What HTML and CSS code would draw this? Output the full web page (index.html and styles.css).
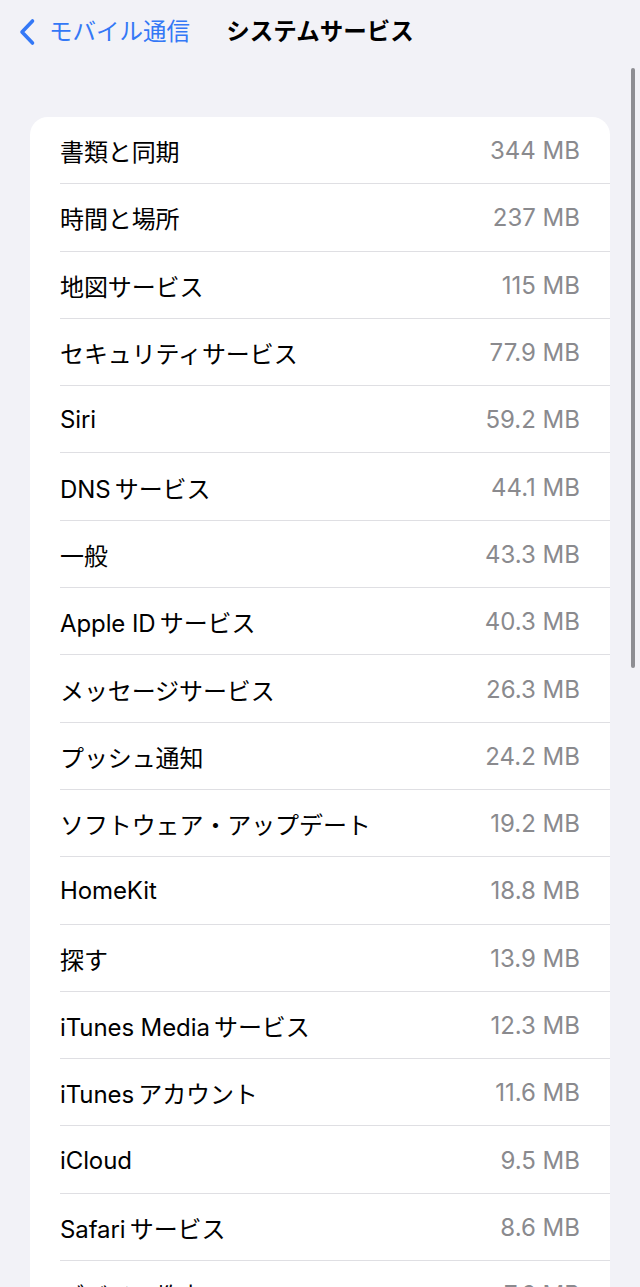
FILE: index.html
```html
<!DOCTYPE html>
<html lang="ja">
<head>
<meta charset="utf-8">
<title>システムサービス</title>
<link rel="stylesheet" href="styles.css">
</head>
<body>
<div class="screen">
  <header class="nav">
    <a class="back">
      <svg class="chev" width="18" height="28" viewBox="0 0 18 28"><path d="M14.5 3 L4 14 L14.5 25" fill="none" stroke="#3478f6" stroke-width="3.6" stroke-linecap="round" stroke-linejoin="round"/></svg>
      <span class="back-label">モバイル通信</span>
    </a>
    <h1 class="title">システムサービス</h1>
  </header>
  <div class="scrollbar"></div>
  <ul class="list">
    <li class="row"><span class="name">書類と同期</span><span class="val">344 MB</span></li>
    <li class="row"><span class="name">時間と場所</span><span class="val">237 MB</span></li>
    <li class="row"><span class="name">地図サービス</span><span class="val">115 MB</span></li>
    <li class="row"><span class="name">セキュリティサービス</span><span class="val">77.9 MB</span></li>
    <li class="row"><span class="name">Siri</span><span class="val">59.2 MB</span></li>
    <li class="row"><span class="name">DNS&#8201;サービス</span><span class="val">44.1 MB</span></li>
    <li class="row"><span class="name">一般</span><span class="val">43.3 MB</span></li>
    <li class="row"><span class="name">Apple ID&#8201;サービス</span><span class="val">40.3 MB</span></li>
    <li class="row"><span class="name">メッセージサービス</span><span class="val">26.3 MB</span></li>
    <li class="row"><span class="name">プッシュ通知</span><span class="val">24.2 MB</span></li>
    <li class="row"><span class="name">ソフトウェア・アップデート</span><span class="val">19.2 MB</span></li>
    <li class="row"><span class="name">HomeKit</span><span class="val">18.8 MB</span></li>
    <li class="row"><span class="name">探す</span><span class="val">13.9 MB</span></li>
    <li class="row"><span class="name">iTunes Media&#8201;サービス</span><span class="val">12.3 MB</span></li>
    <li class="row"><span class="name">iTunes&#8201;アカウント</span><span class="val">11.6 MB</span></li>
    <li class="row"><span class="name">iCloud</span><span class="val">9.5 MB</span></li>
    <li class="row"><span class="name">Safari&#8201;サービス</span><span class="val">8.6 MB</span></li>
    <li class="row"><span class="name">デバイス教育</span><span class="val">7.6 MB</span></li>
  </ul>
</div>
</body>
</html>
```
FILE: styles.css
```css
html, body {
  margin: 0;
  padding: 0;
  background: #f2f2f7;
}
body {
  font-family: "Inter", "Noto Sans CJK JP", sans-serif;
  color: #000;
  overflow: hidden;
  height: 1287px;
}
.screen {
  position: relative;
  width: 640px;
  height: 1287px;
  overflow: hidden;
}
.nav {
  position: relative;
  height: 64px;
  display: flex;
  align-items: center;
  justify-content: center;
}
.back {
  position: absolute;
  left: 18px;
  top: 18px;
  display: flex;
  align-items: center;
  gap: 13px;
  color: #3478f6;
}
.chev {
  display: block;
}
.back-label {
  font-size: 23.5px;
  line-height: 28px;
}
.title {
  margin: 0;
  font-size: 23.5px;
  font-weight: 700;
  line-height: 28px;
}
.scrollbar {
  position: absolute;
  right: 5px;
  top: 68px;
  width: 4px;
  height: 600px;
  border-radius: 2px;
  background: #8e8e93;
}
.list {
  list-style: none;
  margin: 53px 30px 0 30px;
  padding: 0;
  background: #fff;
  border-radius: 18px;
}
.row {
  position: relative;
  height: 67.3px;
  box-sizing: border-box;
  display: flex;
  align-items: center;
  justify-content: space-between;
  padding: 0 30px 0 30px;
  font-size: 24px;
}
.row::after {
  content: "";
  position: absolute;
  left: 30px;
  right: 0;
  bottom: 0;
  height: 1px;
  background: #dfdfe3;
}
.row:last-child::after {
  display: none;
}
.name {
  letter-spacing: -0.1px;
}
.val {
  color: #8a8a8e;
}
```
